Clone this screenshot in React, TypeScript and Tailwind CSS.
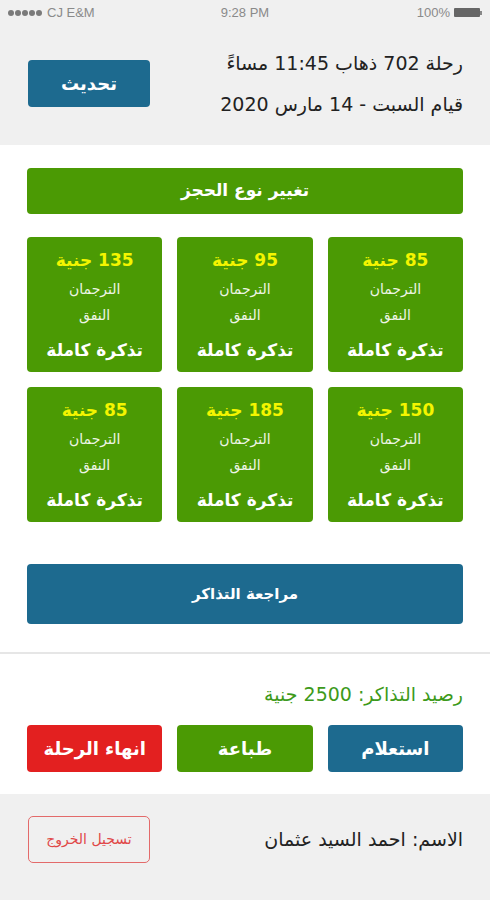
const tickets = [
  { price: "85 جنية" },
  { price: "95 جنية" },
  { price: "135 جنية" },
  { price: "150 جنية" },
  { price: "185 جنية" },
  { price: "85 جنية" },
];

const font = { fontFamily: '"DejaVu Sans", "Noto Sans", sans-serif' };

export default function App() {
  return (
    <div className="w-[490px] h-[900px] bg-white flex flex-col text-[#222]" style={font}>
      {/* Status bar + trip header */}
      <div className="bg-[#f0f0f0] h-[145px] flex flex-col">
        <div className="h-[25px] flex items-center justify-between px-[8px] text-[13px] text-[#8a8a8a]" style={{ fontFamily: '"Liberation Sans", sans-serif' }}>
          <div className="flex items-center gap-[5px] w-[120px]">
            <div className="flex items-center gap-[1px]">
              {[0, 1, 2, 3, 4].map((d) => (
                <span key={d} className="w-[6px] h-[6px] rounded-full bg-[#7a7a7a]" />
              ))}
            </div>
            <span>CJ E&amp;M</span>
          </div>
          <span>9:28 PM</span>
          <div className="flex items-center justify-end gap-[4px] w-[120px]">
            <span>100%</span>
            <div className="flex items-center">
              <div className="w-[26px] h-[9px] bg-[#666] rounded-[1px]" />
              <div className="w-[2px] h-[4px] bg-[#888]" />
            </div>
          </div>
        </div>
        <div dir="rtl" className="flex-1 flex items-center justify-between pr-[27px] pl-[28px] pb-[3px]">
          <div className="flex flex-col gap-[17px] text-[19px] leading-[24px] text-[#222]">
            <span>رحلة 702 ذهاب 11:45 مساءً</span>
            <span>قيام السبت - 14 مارس 2020</span>
          </div>
          <button className="w-[122px] h-[47px] rounded-[4px] bg-[#1d6a8f] text-white text-[18px] font-bold">
            تحديث
          </button>
        </div>
      </div>

      {/* Booking section */}
      <div dir="rtl" className="flex flex-col px-[27px] pt-[23px]">
        <button className="h-[46px] w-full rounded-[4px] bg-[#4b9a04] text-white text-[17px] font-bold">
          تغيير نوع الحجز
        </button>
        <div className="grid grid-cols-3 gap-[15px] mt-[23px]">
          {tickets.map((t, i) => (
            <div
              key={i}
              className="h-[135px] rounded-[4px] bg-[#4b9a04] flex flex-col items-center pt-[10px] text-white"
            >
              <span className="text-[17px] font-bold text-[#f4f500] leading-[26px]">{t.price}</span>
              <span className="text-[14px] leading-[26px] mt-[3px] text-[#eef5e6]">الترجمان</span>
              <span className="text-[14px] leading-[26px] text-[#eef5e6]">النفق</span>
              <span className="text-[17px] font-bold leading-[26px] mt-[9px]">تذكرة كاملة</span>
            </div>
          ))}
        </div>
        <button className="mt-[42px] h-[60px] w-full rounded-[4px] bg-[#1d6a8f] text-white text-[15px] font-bold">
          مراجعة التذاكر
        </button>
      </div>

      <div className="mt-[28px] h-[2px] bg-[#e6e6e6]" />

      {/* Balance + actions */}
      <div dir="rtl" className="flex flex-col px-[27px] pt-[28px]">
        <span className="text-[19px] leading-[24px] text-[#3d9a1a]">رصيد التذاكر: 2500 جنية</span>
        <div className="grid grid-cols-3 gap-[15px] mt-[19px]">
          <button className="h-[47px] rounded-[4px] bg-[#1d6a8f] text-white text-[18px] font-bold">استعلام</button>
          <button className="h-[47px] rounded-[4px] bg-[#4b9a04] text-white text-[18px] font-bold">طباعة</button>
          <button className="h-[47px] rounded-[4px] bg-[#e32020] text-white text-[18px] font-bold">انهاء الرحلة</button>
        </div>
      </div>

      {/* Footer */}
      <div dir="rtl" className="mt-[22px] flex-1 bg-[#f0f0f0] flex items-start justify-between pr-[27px] pl-[28px] pt-[22px]">
        <span className="text-[19px] leading-[24px] mt-[11px] text-[#222]">الاسم: احمد السيد عثمان</span>
        <button className="w-[122px] h-[47px] rounded-[5px] border border-[#e36a6a] text-[#e04848] text-[14px]">
          تسجيل الخروج
        </button>
      </div>
    </div>
  );
}
